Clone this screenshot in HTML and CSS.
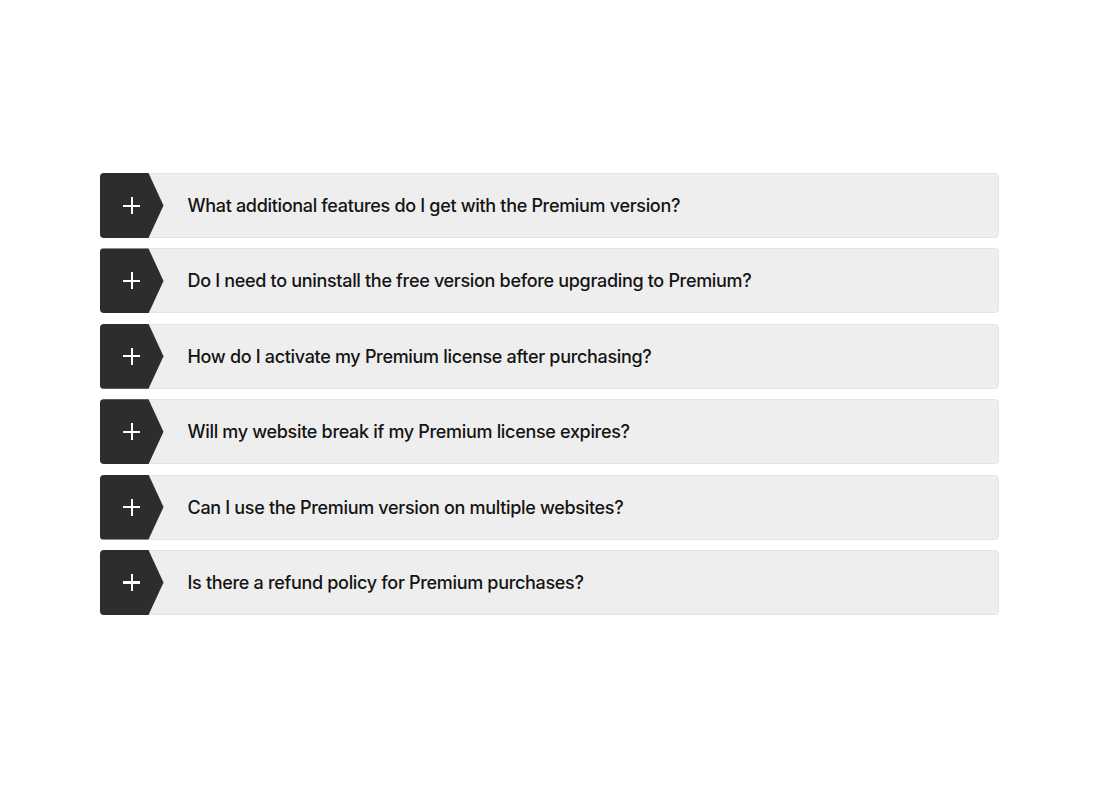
FILE: index.html
```html
<!DOCTYPE html>
<html lang="en">
<head>
<meta charset="utf-8">
<title>FAQ</title>
<link rel="stylesheet" href="styles.css">
</head>
<body>
<main class="faq">
  <div class="item"><div class="icon"><span class="plus"></span></div><div class="q">What additional features do I get with the Premium version?</div></div>
  <div class="item"><div class="icon"><span class="plus"></span></div><div class="q">Do I need to uninstall the free version before upgrading to Premium?</div></div>
  <div class="item"><div class="icon"><span class="plus"></span></div><div class="q">How do I activate my Premium license after purchasing?</div></div>
  <div class="item"><div class="icon"><span class="plus"></span></div><div class="q">Will my website break if my Premium license expires?</div></div>
  <div class="item"><div class="icon"><span class="plus"></span></div><div class="q">Can I use the Premium version on multiple websites?</div></div>
  <div class="item"><div class="icon"><span class="plus"></span></div><div class="q">Is there a refund policy for Premium purchases?</div></div>
</main>
</body>
</html>
```
FILE: styles.css
```css
* { box-sizing: border-box; }
html, body { margin: 0; padding: 0; background: #fff; }
body { font-family: Inter, "Noto Sans", sans-serif; }
.faq {
  width: 899px;
  margin: 173px auto 0;
  display: flex;
  flex-direction: column;
  gap: 10.4px;
}
.item {
  display: flex;
  align-items: center;
  height: 65px;
  background: #eeeeee;
  border: 1px solid #e4e4e4;
  border-radius: 4px;
}
.icon {
  align-self: stretch;
  margin: -1px 0 -1px -1px;
  width: 64px;
  flex: none;
  background: #2d2d2d;
  border-radius: 4px 0 0 4px;
  clip-path: polygon(0 0, 49px 0, 64px 50%, 49px 100%, 0 100%);
  display: flex;
  align-items: center;
  justify-content: center;
}
.plus {
  position: relative;
  width: 17px;
  height: 17px;
}
.plus::before, .plus::after {
  content: "";
  position: absolute;
  background: #fff;
}
.plus::before { left: 0; top: 7.5px; width: 17px; height: 2.2px; }
.plus::after { left: 7.5px; top: 0; width: 2.2px; height: 17px; }
.q {
  padding-left: 24px;
  font-size: 18px;
  font-weight: 500;
  color: #141414;
  letter-spacing: -0.32px;
}
```
